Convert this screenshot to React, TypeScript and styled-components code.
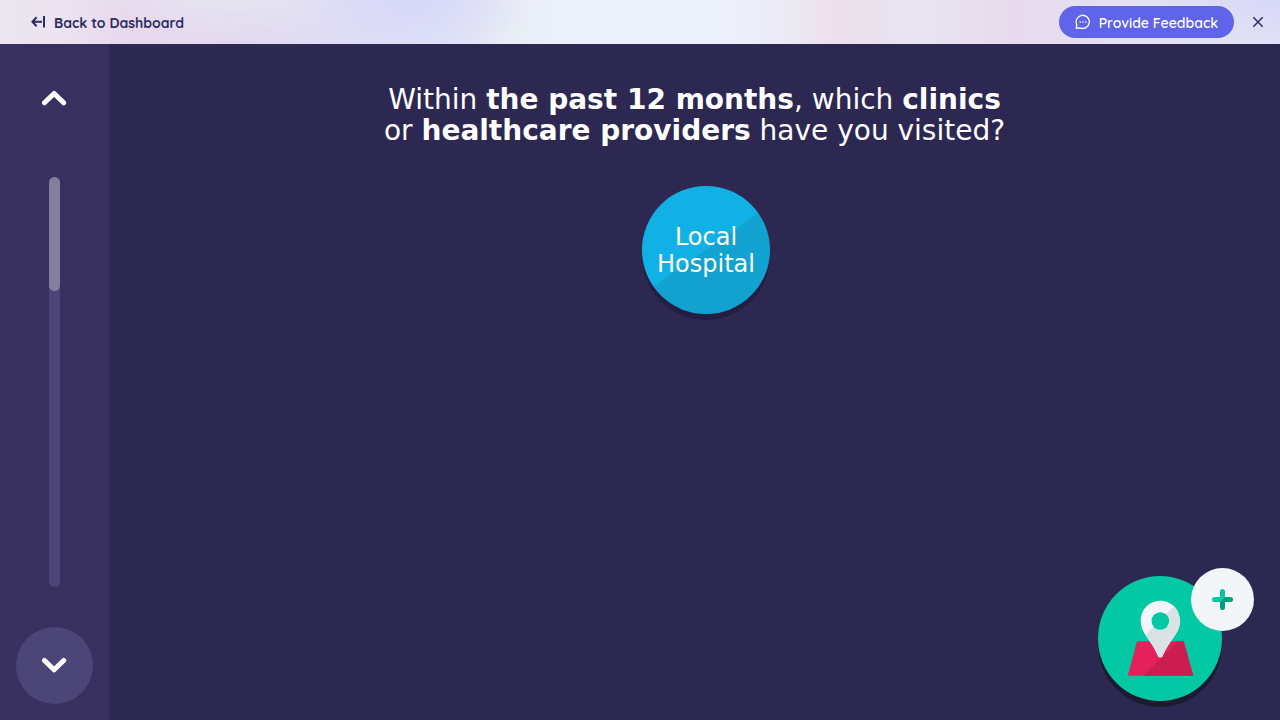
import React from "react";
import styled, { createGlobalStyle } from "styled-components";

const GlobalStyle = createGlobalStyle`
  *, *::before, *::after { box-sizing: border-box; }
  body { margin: 0; background: #2c2852; }
  button { padding: 0; border: 0; background: none; font: inherit; color: inherit; cursor: pointer; }
`;

const Page = styled.div`
  display: flex;
  flex-direction: column;
  min-height: 100vh;
  font-family: "DejaVu Sans", sans-serif;
  color: #ffffff;
  background: #2c2852;
`;

const TopBar = styled.header`
  display: flex;
  align-items: center;
  justify-content: space-between;
  height: 44px;
  padding: 0 10px 0 31px;
  font-family: Quicksand, Lato, sans-serif;
  color: #2f2c63;
  background:
    radial-gradient(ellipse 10% 140% at 32% 0%, rgba(214, 214, 250, 0.9), rgba(214, 214, 250, 0)),
    radial-gradient(ellipse 10% 100% at 100% 0%, rgba(214, 214, 250, 0.9), rgba(214, 214, 250, 0)),
    radial-gradient(ellipse 12% 80% at 19% 0%, rgba(231, 232, 243, 0.8), rgba(231, 232, 243, 0)),
    linear-gradient(
      90deg,
      #ece6f0 0%,
      #ebe3f0 5%,
      #e8d8ec 10%,
      #e6daee 14%,
      #e2daf0 20%,
      #e0def3 27%,
      #dfe2f6 33%,
      #e2e5f4 36%,
      #e9eef5 40%,
      #ecf0fa 44%,
      #ecf0fa 57%,
      #ece9f3 62%,
      #efe0ed 65%,
      #ebe2ef 69%,
      #e8e5f1 72%,
      #e8daed 79%,
      #e4e0f2 88%,
      #dfe2f5 100%
    );
`;

const BarLabel = styled.span`
  padding-top: 2px;
  font-size: 14px;
  line-height: 20px;
`;

const BackLink = styled.a`
  display: flex;
  align-items: center;
  gap: 9px;
  font-weight: 700;
  color: inherit;
  text-decoration: none;
`;

const TopActions = styled.div`
  display: flex;
  align-items: center;
  gap: 12px;
`;

const FeedbackButton = styled.button`
  display: flex;
  align-items: center;
  gap: 8px;
  height: 32px;
  padding: 0 16px;
  border-radius: 16px;
  font-weight: 600;
  color: #ffffff;
  background: #6064ea;
`;

const CloseButton = styled.button`
  display: flex;
  padding: 6px;
`;

const Body = styled.div`
  display: flex;
  flex: 1;
`;

const ScrollRail = styled.nav`
  display: flex;
  flex-direction: column;
  align-items: center;
  gap: 40px;
  width: 109px;
  padding: 16px;
  background: #38315f;
`;

const RailButton = styled.button<{ $filled?: boolean }>`
  display: flex;
  align-items: center;
  justify-content: center;
  width: 77px;
  height: 77px;
  border-radius: 50%;
  background: ${(p) => (p.$filled ? "#4b4677" : "transparent")};
`;

const RailTrack = styled.div`
  flex: 1;
  width: 11px;
  border-radius: 6px;
  background: #4b4677;
`;

const RailThumb = styled.div`
  height: 114px;
  border-radius: 6px;
  background: #857f9f;
`;

const Main = styled.main`
  display: flex;
  flex: 1;
  flex-direction: column;
  align-items: center;
  gap: 40px;
  padding: 40px 24px;
`;

const Question = styled.h1`
  margin: 0;
  font-size: 28px;
  line-height: 31px;
  font-weight: 400;
  text-align: center;
`;

const Choices = styled.div`
  display: flex;
  flex-wrap: wrap;
  justify-content: center;
  gap: 24px;
  padding-left: 23px;
`;

const Choice = styled.button`
  width: 128px;
  height: 128px;
  padding-top: 2px;
  border-radius: 50%;
  font-size: 24px;
  line-height: 27px;
  color: #ffffff;
  background: linear-gradient(145deg, #11b1e5 50%, #12a2cf 50%);
  box-shadow: 0 6px 0 #241f42;
`;

const AddPlace = styled.button`
  position: fixed;
  right: 58px;
  bottom: 19px;
  width: 124px;
  height: 125px;
  border-radius: 50%;
  background: #02c9a3;
  box-shadow: 0 6px 0 #1c1a30;
`;

const AddBadge = styled.span`
  position: absolute;
  top: -8px;
  left: 93px;
  display: flex;
  width: 63px;
  height: 63px;
  border-radius: 50%;
  background: #f2f6f8;
`;

const Drawing = styled.svg`
  display: block;
  flex: none;
`;

const BackIcon = () => (
  <Drawing width="14" height="14" viewBox="0 0 14 14" fill="none" stroke="currentColor" strokeWidth="2" aria-hidden>
    <path d="M5.6 2.2 1.4 6.7l4.2 4.5M1.6 6.7H11M13 1v11.5" />
  </Drawing>
);

const ChatIcon = () => (
  <Drawing width="16" height="16" viewBox="0 0 16 16" fill="none" stroke="currentColor" strokeWidth="1.3" aria-hidden>
    <path d="M1.3 14.4 1.7 10.6A6.6 6.6 0 1 1 5 13.9Z" strokeLinejoin="round" />
    <path d="M4.6 8h1.2M7.4 8h1.2M10.2 8h1.2" />
  </Drawing>
);

const CloseIcon = () => (
  <Drawing width="12" height="12" viewBox="0 0 12 12" fill="none" stroke="currentColor" strokeWidth="1.5" aria-hidden>
    <path d="M1.3 1.3l9.4 9.4M10.7 1.3l-9.4 9.4" />
  </Drawing>
);

const Chevron = ({ down }: { down?: boolean }) => (
  <Drawing width="25" height="17" viewBox="0 0 25 17" fill="none" stroke="#ffffff" strokeWidth="5" strokeLinecap="round" strokeLinejoin="round" aria-hidden>
    <path d={down ? "M2.5 3.5 12.1 12.8 21.7 3.5" : "M2.5 12.8 12.1 3.5 21.7 12.8"} />
  </Drawing>
);

const PIN =
  "M62.3 24.7C51.2 24.7 42.7 33.6 42.7 45c0 5 1.7 9.5 4.6 13.7 7 9.8 10.5 15.8 12.7 21.3.4 1 .8 1.3 1.5 1.3h1.7c.7 0 1.1-.3 1.5-1.3 2.2-5.5 5.7-11.5 12.7-21.3 2.9-4.2 4.6-8.7 4.6-13.7 0-11.4-8.5-20.3-19.7-20.3Z";

const MapIcon = () => (
  <Drawing width="124" height="125" viewBox="0 0 124 125" aria-hidden>
    <defs>
      <clipPath id="pin-shape">
        <path d={PIN} />
      </clipPath>
    </defs>
    <path d="M39 65.3H85.7L95.3 99.7H29.7Z" fill="#e5215c" />
    <path d="M79.7 65.3H85.7L95.3 99.7H45.3Z" fill="#cc1d53" />
    <g clipPath="url(#pin-shape)">
      <path d="M40 20h46v64H40Z" fill="#f2f6f8" />
      <path d="M86.2 20V84H22.2Z" fill="#dae2e6" />
    </g>
    <circle cx="62.3" cy="45" r="8.8" fill="#02c9a3" />
  </Drawing>
);

const PlusIcon = () => (
  <Drawing width="63" height="63" viewBox="0 0 63 63" fill="none" strokeWidth="5" strokeLinecap="round" aria-hidden>
    <path d="M31.5 31.5h8M31.5 31.5v8" stroke="#009e81" />
    <path d="M23.5 31.5h6M31.5 23.5v6" stroke="#02c9a3" />
    <path d="M29 29h5l-5 5Z" fill="#02c9a3" />
    <path d="M34 29v5h-5Z" fill="#009e81" />
  </Drawing>
);

export default function App() {
  return (
    <Page>
      <GlobalStyle />
      <TopBar>
        <BackLink href="#dashboard">
          <BackIcon />
          <BarLabel>Back to Dashboard</BarLabel>
        </BackLink>
        <TopActions>
          <FeedbackButton type="button">
            <ChatIcon />
            <BarLabel>Provide Feedback</BarLabel>
          </FeedbackButton>
          <CloseButton type="button" aria-label="Close">
            <CloseIcon />
          </CloseButton>
        </TopActions>
      </TopBar>
      <Body>
        <ScrollRail aria-label="Scroll questions">
          <RailButton type="button" aria-label="Previous">
            <Chevron />
          </RailButton>
          <RailTrack>
            <RailThumb />
          </RailTrack>
          <RailButton type="button" aria-label="Next" $filled>
            <Chevron down />
          </RailButton>
        </ScrollRail>
        <Main>
          <Question>
            Within <strong>the past 12 months</strong>, which <strong>clinics</strong>
            <br />
            or <strong>healthcare providers</strong> have you visited?
          </Question>
          <Choices>
            <Choice type="button">
              Local
              <br />
              Hospital
            </Choice>
          </Choices>
        </Main>
      </Body>
      <AddPlace type="button" aria-label="Add a place">
        <MapIcon />
        <AddBadge>
          <PlusIcon />
        </AddBadge>
      </AddPlace>
    </Page>
  );
}
